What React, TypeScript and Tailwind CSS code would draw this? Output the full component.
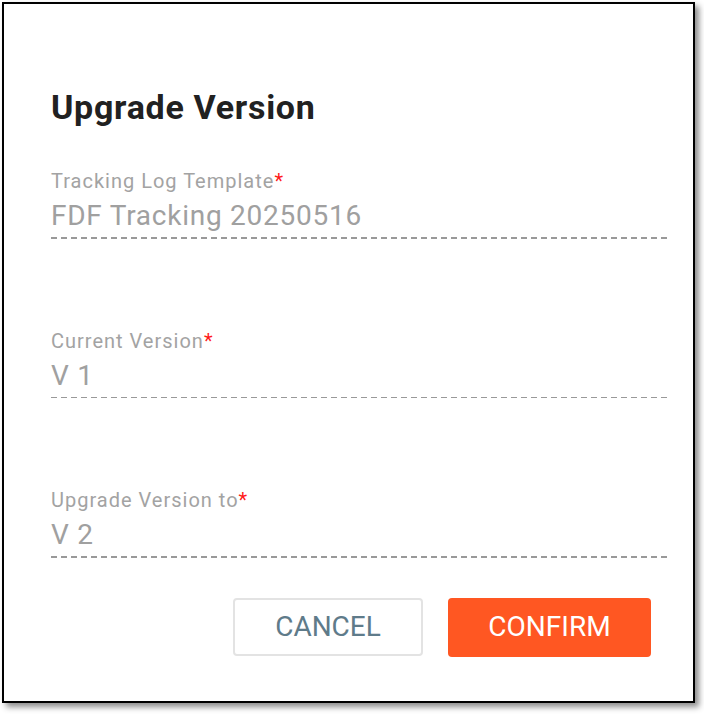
const fields = [
  { label: "Tracking Log Template", value: "FDF Tracking 20250516" },
  { label: "Current Version", value: "V 1" },
  { label: "Upgrade Version to", value: "V 2" },
];

function Field({ label, value, first }: { label: string; value: string; first?: boolean }) {
  return (
    <div className={first ? "mt-[42px]" : "mt-[90px]"}>
      <div className="text-[20px] leading-[24px] tracking-[1px] text-[#a3a3a3]">
        {label}
        <span className="text-[#ff1a1a]">*</span>
      </div>
      <div className="mt-[7px] text-[28px] leading-[32px] tracking-[0.75px] text-[#a0a0a0]">{value}</div>
      <div className="mt-[5px] h-[1.5px] bg-[linear-gradient(to_right,#999999_6px,transparent_6px)] bg-[length:10px_1.5px] bg-repeat-x" />
    </div>
  );
}

export default function App() {
  return (
    <div className="min-h-[714px] bg-white p-[2px] font-['Roboto',sans-serif]">
      <div className="h-[701px] w-[693px] border-2 border-black bg-white shadow-[4px_4px_6px_rgba(0,0,0,0.45)]">
        <div className="pl-[47px] pr-[26px] pt-[83px]">
          <h1 className="text-[34px] font-bold leading-[40px] tracking-[0.7px] text-[#212121]">Upgrade Version</h1>
          {fields.map((f, i) => (
            <Field key={f.label} label={f.label} value={f.value} first={i === 0} />
          ))}
          <div className="mt-[40px] flex justify-end gap-[25px] pr-[16px]">
            <button className="h-[58px] w-[190px] rounded-[4px] border-2 border-[#e3e3e3] bg-white text-[28px] text-[#5f7b8a]">
              CANCEL
            </button>
            <button className="h-[59px] w-[203px] rounded-[4px] bg-[#ff5722] text-[28px] text-white">
              CONFIRM
            </button>
          </div>
        </div>
      </div>
    </div>
  );
}
